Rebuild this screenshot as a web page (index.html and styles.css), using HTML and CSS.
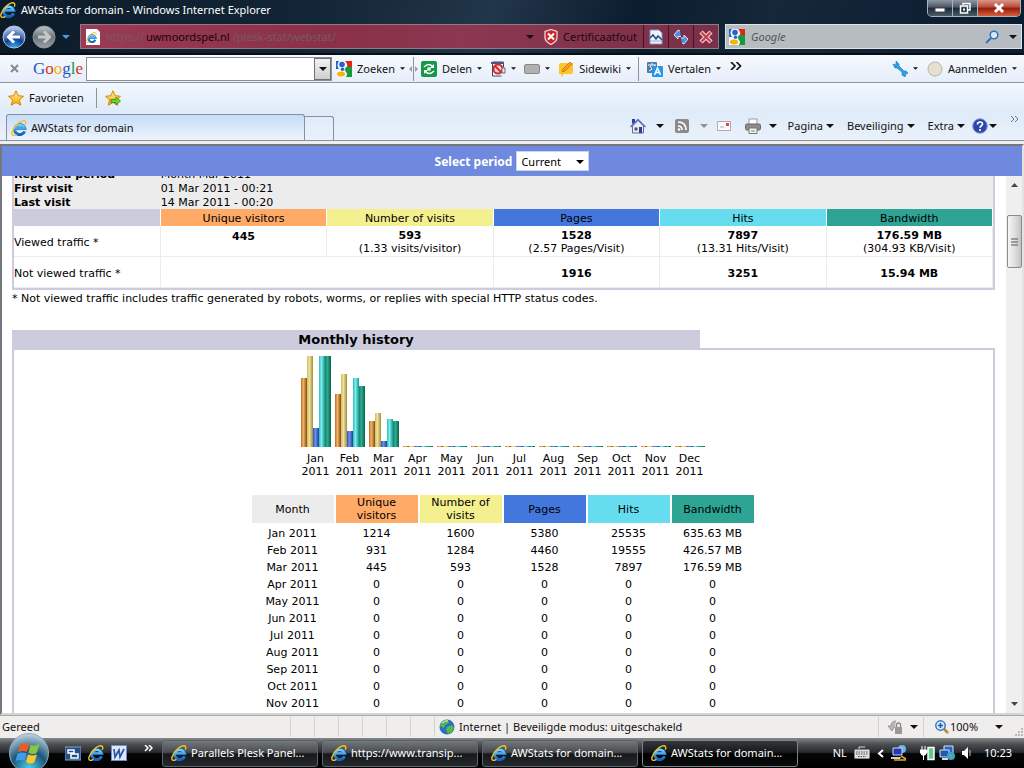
FILE: index.html
```html
<!DOCTYPE html>
<html lang="nl">
<head>
  <meta charset="UTF-8" />
  <meta name="viewport" content="width=device-width, initial-scale=1.0" />
  <title>AWStats for domain - Windows Internet Explorer</title>
  <link rel="stylesheet" href="styles.css">
</head>
<body>
  <!-- shared icons -->
  <svg width="0" height="0" class="defs" aria-hidden="true">
    <defs>
      <linearGradient id="ieBlue" x1="0" y1="0" x2="0" y2="1"><stop offset="0" stop-color="#6fd3fb"/><stop offset="1" stop-color="#0b62c4"/></linearGradient>
      <linearGradient id="gold" x1="0" y1="0" x2="0" y2="1"><stop offset="0" stop-color="#fff3a0"/><stop offset="1" stop-color="#f7a400"/></linearGradient>
      <linearGradient id="grey" x1="0" y1="0" x2="0" y2="1"><stop offset="0" stop-color="#c3c6ca"/><stop offset="0.5" stop-color="#6d7379"/><stop offset="1" stop-color="#9aa0a6"/></linearGradient>
      <radialGradient id="nav" cx="0.5" cy="1" r="0.9"><stop offset="0" stop-color="#35b5f5"/><stop offset="0.5" stop-color="#123f9a"/><stop offset="1" stop-color="#a9c0e6"/></radialGradient>
      <radialGradient id="orb" cx="0.5" cy="0.9" r="0.9"><stop offset="0" stop-color="#4fd0f0"/><stop offset="0.5" stop-color="#1b5578"/><stop offset="1" stop-color="#c2d8e4"/></radialGradient>
    </defs>
    <symbol id="ie" viewBox="0 0 16 16">
      <path d="M13.600 11.500A5.200 5 0 1 1 13.800 8.300H5" fill="none" stroke="#1767b8" stroke-width="3"/>
      <path d="M13.400 11.500A5 4.800 0 1 1 13.600 8.300H5" fill="none" stroke="url(#ieBlue)" stroke-width="2.200"/>
      <path d="M5.500 14.400C2 16.300.2 15.200 1 12.200 2.300 7.500 7.500 2 11.500.9 14.500.2 15.500 2 14.300 4.800" fill="none" stroke="#f6c02a" stroke-width="1.400"/>
    </symbol>
    <symbol id="down" viewBox="0 0 8 4"><path d="M0 0h8L4 4z" fill="currentColor"/></symbol>
    <symbol id="g" viewBox="0 0 16 16">
      <path d="M0 0h16v16H0z" fill="#f4f6f8"/><path d="M9 0h7v6h-5q1-3-2-6z" fill="#e2231a"/><path d="M10 6h6v10h-6q2-3 0-5-2-2 0-5z" fill="#159a3c"/><path d="M0 0h3q-3 4 0 8H0z" fill="#2b62c9"/><circle cx="6" cy="3.500" r="2.800" fill="#2b62c9"/><circle cx="6.500" cy="8.300" r="1.800" fill="#2b62c9"/><ellipse cx="5" cy="13" rx="4" ry="2.500" fill="#f6b500"/>
    </symbol>
    <symbol id="star" viewBox="0 0 16 16"><path d="M8 .8l2.2 4.9 5.3.6-4 3.6 1.2 5.3L8 12.5l-4.7 2.7 1.2-5.3-4-3.6 5.3-.6z" fill="url(#gold)" stroke="#d98500"/></symbol>
  </svg>

  <header class="chrome">
    <div class="title-bar">
      <svg class="icon"><use href="#ie"/></svg>
      <span>AWStats for domain - Windows Internet Explorer</span>
      <div class="window-buttons">
        <button aria-label="Minimize"><svg width="12" height="12" viewBox="0 0 12 12"><path d="M1 6h10v4H1z" fill="#fff" stroke="#445"/></svg></button>
        <button aria-label="Restore"><svg width="12" height="12" viewBox="0 0 12 12"><path d="M4 3V1.500h7v6.500H9M1.500 4h7v7h-7z" fill="none" stroke="#fff" stroke-width="1.500"/><path d="M4 6.500h2v2H4z" fill="#fff"/></svg></button>
        <button class="close" aria-label="Close"><svg width="12" height="12" viewBox="0 0 12 12"><path d="M2 2l8 8M10 2l-8 8" stroke="#fff" stroke-width="3"/></svg></button>
      </div>
    </div>
    <div class="address-row">
      <div class="nav-buttons">
        <button aria-label="Vorige"><svg width="24" height="24" viewBox="0 0 24 24"><circle cx="12" cy="12" r="11" fill="url(#nav)" stroke="#b4c3dc"/><path d="M18 12H7M12 6.500L6.500 12l5.500 5.500" fill="none" stroke="#fff" stroke-width="3"/></svg></button>
        <button aria-label="Volgende"><svg width="24" height="24" viewBox="0 0 24 24"><circle cx="12" cy="12" r="11" fill="url(#grey)" stroke="#8d959d"/><path d="M6 12h11M12 6.500l5.500 5.500-5.500 5.500" fill="none" stroke="#c5c9cc" stroke-width="3"/></svg></button>
        <svg class="caret blue"><use href="#down"/></svg>
      </div>
      <div class="address">
        <svg class="icon" viewBox="0 0 16 16"><path d="M1 0h11l3 3v13H1z" fill="#fff"/><use href="#ie" x="1" y="3" width="11" height="11"/></svg>
        <span class="url">https://<b>uwmoordspel.nl</b>/plesk-stat/webstat/</span>
        <svg class="caret"><use href="#down"/></svg>
        <button class="cert"><svg width="14" height="16" viewBox="0 0 14 16"><path d="M7 .5l6 2v6q0 4-6 7-6-3-6-7v-6z" fill="#c8282c" stroke="#e8d4d8" stroke-width="1.300"/><path d="M4 4.500l6 6M10 4.500l-6 6" stroke="#fff" stroke-width="2"/></svg>Certificaatfout</button>
        <button class="cell" aria-label="Compatibiliteit"><svg width="14" height="16" viewBox="0 0 14 16"><path d="M1 1h9l3 3v11H1z" fill="#eef3fa" stroke="#7d9cc4"/><path d="M1 9l3-3 3 4 2-3 4 4" fill="none" stroke="#304a80" stroke-width="1.500"/><path d="M1 12h12" stroke="#8fb0d8"/></svg></button>
        <button class="cell" aria-label="Vernieuwen"><svg width="16" height="16" viewBox="0 0 16 16"><path d="M7 2L5 1 1 6l4 4V7.500h3M9 14l2 1 4-5-4-4v3H8" fill="#4e91e0" stroke="#cfe2fa"/></svg></button>
        <button class="cell" aria-label="Stoppen"><svg width="14" height="14" viewBox="0 0 14 14"><path d="M2 2l10 10M12 2L2 12" stroke="#f7c8c8" stroke-width="4.500"/><path d="M2.500 2.500l9 9M11.500 2.500l-9 9" stroke="#c43c4c" stroke-width="2"/></svg></button>
      </div>
      <div class="search">
        <svg class="icon"><use href="#g"/></svg>
        <input type="text" placeholder="Google" aria-label="Zoeken met Google">
        <svg width="14" height="14" viewBox="0 0 14 14"><circle cx="9" cy="5" r="3.800" fill="#d6eafc" stroke="#3470b8" stroke-width="1.500"/><path d="M6 8l-5 5" stroke="#3470b8" stroke-width="2"/></svg>
        <svg class="caret"><use href="#down"/></svg>
      </div>
    </div>
  </header>

  <nav class="google-bar">
    <button class="dismiss" aria-label="Sluiten"><svg width="9" height="9" viewBox="0 0 9 9"><path d="M1 1l7 7M8 1L1 8" stroke="#85898f" stroke-width="2"/></svg></button>
    <span class="logo"><i class="b">G</i><i class="r">o</i><i class="y">o</i><i class="b">g</i><i class="n">l</i><i class="r">e</i></span>
    <div class="query">
      <input type="text" aria-label="Google zoekopdracht">
      <button aria-label="Geschiedenis"><svg class="caret"><use href="#down"/></svg></button>
    </div>
    <button><svg class="icon"><use href="#g"/></svg>Zoeken<svg class="caret small"><use href="#down"/></svg></button>
    <svg class="splitter" width="9" height="24" viewBox="0 0 9 24"><path d="M4.500 0v24" stroke="#8c939c"/><path d="M3 9v6L0 12zM6 9v6l3-3z" fill="#9a9fa6"/></svg>
    <button><svg class="icon" viewBox="0 0 16 16"><rect width="16" height="16" rx="2" fill="#16974a"/><path d="M3 6q5-5 9 0M13 10q-5 5-9 0" fill="none" stroke="#fff" stroke-width="1.500"/><circle cx="8" cy="8" r="2" fill="#d2f3de"/><path d="M13 3v4H9zM3 13V9h4z" fill="#fff"/></svg>Delen<svg class="caret small"><use href="#down"/></svg></button>
    <button class="wide" aria-label="Pop-ups"><svg class="icon" viewBox="0 0 16 16"><path d="M2.500 1h11v5M2.500 1v14h9" fill="#fff" stroke="#34466e"/><path d="M1 1h13v2H1z" fill="#44577e"/><circle cx="8" cy="8" r="4.500" fill="#fbd8d8" stroke="#d42a2a" stroke-width="2"/><path d="M5 5l6 6" stroke="#d42a2a" stroke-width="2"/><path d="M12 7h3v5h-3z" fill="#eee" stroke="#667"/></svg><svg class="caret small"><use href="#down"/></svg></button>
    <button class="wide" aria-label="PageRank"><svg class="icon" viewBox="0 0 16 16"><rect x=".5" y="3.500" width="15" height="9" rx="1.500" fill="#b0b0b0" stroke="#888"/></svg><svg class="caret small"><use href="#down"/></svg></button>
    <button class="wide"><svg class="icon" viewBox="0 0 16 16"><path d="M1 4q0-2 2-2h12v9q0 2-2 2H6l-3 3v-3H1z" fill="#fdc52c"/><path d="M4 11l1-3 7-7 2 2-7 7z" fill="#ff9a1e" stroke="#b76a10" stroke-width=".7"/></svg>Sidewiki<svg class="caret small"><use href="#down"/></svg></button>
    <span class="divider"></span>
    <button><svg class="icon" viewBox="0 0 16 16"><rect width="10" height="11" y="1" rx="1" fill="#56799e"/><path d="M1 4h8M5 2v2M2 10q5-2 6-6M3 5q2 4 5 5" fill="none" stroke="#fff"/><rect x="5" y="5" width="11" height="11" rx="1" fill="#2796e8"/><path d="M7.500 14L10.500 7l3 7M8.500 11.500h4" fill="none" stroke="#fff" stroke-width="1.500"/></svg>Vertalen<svg class="caret small"><use href="#down"/></svg></button>
    <button class="more" aria-label="Meer"><svg width="12" height="8" viewBox="0 0 12 8"><path d="M1 0l4 4-4 4M6.500 0l4 4-4 4" fill="none" stroke="#111" stroke-width="1.700"/></svg></button>
    <div class="right">
      <button aria-label="Opties"><svg class="icon" viewBox="0 0 16 16"><path d="M1 3l3 1V0l3 3v2l5 5h2l2 2-2 1-1 3-3-2V11L5 7H3z" fill="#27a1e8" stroke="#1576b8" stroke-width=".6"/></svg><svg class="caret small"><use href="#down"/></svg></button>
      <button><svg class="icon" viewBox="0 0 16 16"><circle cx="8" cy="8" r="7" fill="#e5e1cd" stroke="#b8b5a5"/></svg>Aanmelden<svg class="caret small"><use href="#down"/></svg></button>
    </div>
  </nav>

  <div class="lower-bars">
    <div class="favorites">
      <button><svg class="icon"><use href="#star"/></svg>Favorieten</button>
      <span class="divider"></span>
      <button aria-label="Toevoegen"><svg class="icon" viewBox="0 0 16 16"><use href="#star"/><path d="M6 9.500h5V7l4.500 4-4.500 4v-2.500H6z" fill="#6cd82e" stroke="#2c8a16" stroke-width=".8"/></svg></button>
    </div>
    <div class="tab-row">
      <button class="tab"><svg class="icon"><use href="#ie"/></svg>AWStats for domain</button>
      <button class="new-tab" aria-label="Nieuw tabblad"></button>
      <div class="commands">
        <button class="home" aria-label="Startpagina"><svg class="icon" viewBox="0 0 16 16"><path d="M2.500 8v7h11V8L8 2.500z" fill="#e9edf5" stroke="#626f92"/><path d="M.5 9L8 1.500 15.500 9" fill="none" stroke="#5a6cc0" stroke-width="1.300"/><path d="M2 1h3v3L2 6z" fill="#2b3fae"/><path d="M9 9h3v6H9z" fill="#2b3d98"/><path d="M4.500 9.500h3v3h-3z" fill="#555"/></svg><svg class="caret"><use href="#down"/></svg></button>
        <button class="feed" aria-label="Feeds"><svg class="icon" viewBox="0 0 16 16"><rect x="1" y="1" width="14" height="14" rx="2" fill="#8a8a8a"/><path d="M4 8q4 0 4 4M4 4q8 0 8 8" fill="none" stroke="#fff" stroke-width="1.700"/><circle cx="5" cy="11.500" r="1.300" fill="#fff"/></svg><svg class="caret dim"><use href="#down"/></svg></button>
        <button class="mail" aria-label="E-mail"><svg class="icon" viewBox="0 0 16 16"><path d="M1.500 3.500h13v9h-13z" fill="#fbfbfb" stroke="#a8adb5"/><path d="M10 5h3v3h-3z" fill="#e04848"/><path d="M4 9h4" stroke="#a8adb5"/></svg></button>
        <button class="print" aria-label="Afdrukken"><svg class="icon" viewBox="0 0 16 16"><path d="M4 1h8v6H4z" fill="#fff" stroke="#999"/><rect x=".5" y="6" width="15" height="6" rx="1.500" fill="#8c8c8c" stroke="#666"/><path d="M4 10h8v5.500H4z" fill="#f5f5f5" stroke="#777"/><path d="M6 13h4" stroke="#4a4"/></svg><svg class="caret"><use href="#down"/></svg></button>
        <button>Pagina<svg class="caret"><use href="#down"/></svg></button>
        <button>Beveiliging<svg class="caret"><use href="#down"/></svg></button>
        <button>Extra<svg class="caret"><use href="#down"/></svg></button>
        <button class="help" aria-label="Help"><svg class="icon" viewBox="0 0 16 16"><circle cx="8" cy="8" r="7.300" fill="#2a46ac" stroke="#8aa0d8"/><path d="M5.500 6.500q0-2.500 2.500-2.500t2.500 2q0 1-1.200 1.800T8 9.800M8 11v2" fill="none" stroke="#fff" stroke-width="1.700"/></svg><svg class="caret"><use href="#down"/></svg></button>
        <svg class="overflow" width="9" height="6" viewBox="0 0 9 6"><path d="M1 0l3 3-3 3M5 0l3 3-3 3" fill="none" stroke="#5a73a8"/></svg>
      </div>
    </div>
  </div>

  <div class="viewport">
    <form class="period-bar">
      <label for="period">Select period</label>
      <div class="select-wrap">
        <select id="period"><option>Current</option></select>
        <svg class="caret"><use href="#down"/></svg>
      </div>
    </form>
    <div class="scroll-area">
      <main class="report">
        <section class="summary">
          <dl>
            <dt>Reported period</dt><dd>Month Mar 2011</dd>
            <dt>First visit</dt><dd>01 Mar 2011 - 00:21</dd>
            <dt>Last visit</dt><dd>14 Mar 2011 - 00:20</dd>
          </dl>
          <table class="traffic">
            <tr><th class="lead"></th><th class="visitors">Unique visitors</th><th class="visits">Number of visits</th><th class="pages">Pages</th><th class="hits">Hits</th><th class="bandwidth">Bandwidth</th></tr>
            <tr><td class="label">Viewed traffic *</td><td class="top"><b>445</b></td><td><b>593</b><br>(1.33 visits/visitor)</td><td><b>1528</b><br>(2.57 Pages/Visit)</td><td><b>7897</b><br>(13.31 Hits/Visit)</td><td><b>176.59 MB</b><br>(304.93 KB/Visit)</td></tr>
            <tr><td class="label">Not viewed traffic *</td><td colspan="2"></td><td><b>1916</b></td><td><b>3251</b></td><td><b>15.94 MB</b></td></tr>
          </table>
        </section>
        <p class="note">* Not viewed traffic includes traffic generated by robots, worms, or replies with special HTTP status codes.</p>

        <h2>Monthly history</h2>
        <section class="history">
          <div class="chart">
            <div class="month"><div class="bars"><i style="height:69px"></i><i style="height:91px"></i><i style="height:19px"></i><i style="height:91px"></i><i style="height:91px"></i></div>Jan<br>2011</div>
            <div class="month"><div class="bars"><i style="height:53px"></i><i style="height:73px"></i><i style="height:16px"></i><i style="height:69px"></i><i style="height:61px"></i></div>Feb<br>2011</div>
            <div class="month"><div class="bars"><i style="height:26px"></i><i style="height:34px"></i><i style="height:6px"></i><i style="height:28px"></i><i style="height:26px"></i></div>Mar<br>2011</div>
            <div class="month"><div class="bars"><i></i><i></i><i></i><i></i><i></i></div>Apr<br>2011</div>
            <div class="month"><div class="bars"><i></i><i></i><i></i><i></i><i></i></div>May<br>2011</div>
            <div class="month"><div class="bars"><i></i><i></i><i></i><i></i><i></i></div>Jun<br>2011</div>
            <div class="month"><div class="bars"><i></i><i></i><i></i><i></i><i></i></div>Jul<br>2011</div>
            <div class="month"><div class="bars"><i></i><i></i><i></i><i></i><i></i></div>Aug<br>2011</div>
            <div class="month"><div class="bars"><i></i><i></i><i></i><i></i><i></i></div>Sep<br>2011</div>
            <div class="month"><div class="bars"><i></i><i></i><i></i><i></i><i></i></div>Oct<br>2011</div>
            <div class="month"><div class="bars"><i></i><i></i><i></i><i></i><i></i></div>Nov<br>2011</div>
            <div class="month"><div class="bars"><i></i><i></i><i></i><i></i><i></i></div>Dec<br>2011</div>
          </div>
          <table class="months">
            <tr><th class="name">Month</th><th class="visitors">Unique visitors</th><th class="visits">Number of visits</th><th class="pages">Pages</th><th class="hits">Hits</th><th class="bandwidth">Bandwidth</th></tr>
            <tr><td>Jan 2011</td><td>1214</td><td>1600</td><td>5380</td><td>25535</td><td>635.63 MB</td></tr>
            <tr><td>Feb 2011</td><td>931</td><td>1284</td><td>4460</td><td>19555</td><td>426.57 MB</td></tr>
            <tr><td>Mar 2011</td><td>445</td><td>593</td><td>1528</td><td>7897</td><td>176.59 MB</td></tr>
            <tr><td>Apr 2011</td><td>0</td><td>0</td><td>0</td><td>0</td><td>0</td></tr>
            <tr><td>May 2011</td><td>0</td><td>0</td><td>0</td><td>0</td><td>0</td></tr>
            <tr><td>Jun 2011</td><td>0</td><td>0</td><td>0</td><td>0</td><td>0</td></tr>
            <tr><td>Jul 2011</td><td>0</td><td>0</td><td>0</td><td>0</td><td>0</td></tr>
            <tr><td>Aug 2011</td><td>0</td><td>0</td><td>0</td><td>0</td><td>0</td></tr>
            <tr><td>Sep 2011</td><td>0</td><td>0</td><td>0</td><td>0</td><td>0</td></tr>
            <tr><td>Oct 2011</td><td>0</td><td>0</td><td>0</td><td>0</td><td>0</td></tr>
            <tr><td>Nov 2011</td><td>0</td><td>0</td><td>0</td><td>0</td><td>0</td></tr>
          </table>
        </section>
      </main>
      <div class="scrollbar">
        <svg width="7" height="4"><path d="M0 4h7L3.500 0z" fill="#444"/></svg>
        <div class="thumb"><svg width="7" height="8" viewBox="0 0 7 8"><path d="M0 1h7M0 4h7M0 7h7" stroke="#555"/></svg></div>
        <svg width="7" height="4"><path d="M0 0h7L3.500 4z" fill="#444"/></svg>
      </div>
    </div>
  </div>

  <footer class="status-bar">
    <span class="state">Gereed</span>
    <div class="ticks"><i></i><i></i><i></i><i></i><i></i><i></i><i></i></div>
    <svg class="icon" viewBox="0 0 16 16"><circle cx="8" cy="8" r="7.500" fill="#2c6fc2"/><path d="M3 3q3-3 6-2l1 3-4 2-1 3-4-2zM8 8l5-2 2 3-3 5-3 1-2-4z" fill="#57b947"/><path d="M3 4q3-3 6-2" stroke="#d7f2fb" fill="none"/></svg>
    <span class="zone">Internet | Beveiligde modus: uitgeschakeld</span>
    <button class="lock" aria-label="Privacy"><svg class="icon" viewBox="0 0 16 16"><path d="M9 2q-5 0-5 5H1l4 5 3-5" fill="#b6b6b6" stroke="#999"/><rect x="8" y="8" width="7" height="7" fill="#999"/><path d="M9.500 8V6q0-2 2-2t2 2v2" fill="none" stroke="#888" stroke-width="1.300"/></svg><svg class="caret"><use href="#down"/></svg></button>
    <button class="zoom"><svg width="14" height="14" viewBox="0 0 14 14"><path d="M8 8l5 5" stroke="#b98a3c" stroke-width="2.500"/><circle cx="5.500" cy="5.500" r="4.700" fill="#d4eafc" stroke="#3b78bd" stroke-width="1.500"/><path d="M3 5.500h5M5.500 3v5" stroke="#1d5bb0" stroke-width="1.500"/></svg><span>100%</span><svg class="caret"><use href="#down"/></svg></button>
    <svg class="grip" width="8" height="8" viewBox="0 0 8 8"><path d="M6 0h2v2H6zM3 3h2v2H3zM6 3h2v2H6zM0 6h2v2H0zM3 6h2v2H3zM6 6h2v2H6z" fill="#bdb9b9"/></svg>
  </footer>

  <footer class="taskbar">
    <button class="start" aria-label="Start"><svg width="42" height="42" viewBox="0 0 42 42"><circle cx="21" cy="21" r="19.500" fill="url(#orb)" stroke="#8fa9b8"/><path d="M12 13q4-3 9-1l-2 8q-4-2-9 0z" fill="#ef5a25"/><path d="M22.500 13q4 2 9-1l-2.500 8.500q-4 3-8.500 0z" fill="#86c83e"/><path d="M9.500 21.500q5-2 9 0l-2 7.500q-4-2-9 0z" fill="#3d9be8"/><path d="M20 22.500q4 2 9 0l-2.500 7.500q-4 3-8.500 0z" fill="#fcc628"/></svg></button>
    <div class="quick">
      <button aria-label="Vensters"><svg class="icon" viewBox="0 0 16 16"><rect y="2" width="16" height="13" fill="#234f86" stroke="#7fa4cc"/><path d="M3 5h6v3H3zM6 9h7v4H6z" fill="none" stroke="#fff" stroke-width="1.500"/></svg></button>
      <button aria-label="Internet Explorer"><svg class="icon"><use href="#ie"/></svg></button>
      <button aria-label="Word"><svg class="icon" viewBox="0 0 16 16"><rect width="16" height="16" fill="#6a8fd0"/><path d="M1 1h14v14H1z" fill="#dde8f8"/><path d="M3 4l1 8 4-7 1 7 4-8" fill="none" stroke="#2a52a6" stroke-width="1.700"/></svg></button>
      <svg class="overflow" width="9" height="7" viewBox="0 0 9 7"><path d="M1 0l3 3-3 3M5 0l3 3-3 3" fill="none" stroke="#fff" stroke-width="1.500"/></svg>
    </div>
    <div class="tasks">
      <button><svg class="icon"><use href="#ie"/></svg>Parallels Plesk Panel...</button>
      <button><svg class="icon"><use href="#ie"/></svg>https://www.transip...</button>
      <button><svg class="icon"><use href="#ie"/></svg>AWStats for domain...</button>
      <button class="active"><svg class="icon"><use href="#ie"/></svg>AWStats for domain...</button>
    </div>
    <div class="tray">
      <span>NL</span>
      <svg class="icon" viewBox="0 0 16 16"><path d="M5 4V2h6" fill="none" stroke="#ddd"/><rect x=".5" y="4.500" width="15" height="9" rx="1" fill="#ddd" stroke="#888"/><path d="M2 7h12M2 9h12M4 11.500h8" stroke="#555" stroke-dasharray="1.500 1"/></svg>
      <svg width="7" height="9" viewBox="0 0 7 9"><path d="M6 1L2 4.500 6 8" fill="none" stroke="#fff" stroke-width="2"/></svg>
      <svg class="icon" viewBox="0 0 16 16"><circle cx="11" cy="4" r="4" fill="#66b6e8"/><path d="M2 3h9v7H2z" fill="#2636b8" stroke="#cdd6ee"/><path d="M0 12h10l-1 2H0z" fill="#ccc"/><path d="M3 15h12M10 11l5 3" stroke="#e0a52c" stroke-width="1.500"/></svg>
      <svg class="icon power" viewBox="0 0 16 16"><path d="M2 1v4M5 1v4M0 5h7v2L5 10H2L0 7zM3.500 10v5" fill="#fff" stroke="#fff"/><rect x="8" y="2.500" width="6" height="12" fill="#63c88e" stroke="#fff" stroke-width="1.500"/></svg>
      <svg class="icon" viewBox="0 0 16 16"><path d="M5 1h9v8H5z" fill="#2866c8" stroke="#d5e6f5"/><path d="M1 5h9v7H1z" fill="#1d59b5" stroke="#d5e6f5"/><path d="M3 14h6" stroke="#ddd" stroke-width="2"/><circle cx="12" cy="11" r="4" fill="#3f9fd0"/><path d="M10 9l3 1-1 4z" fill="#65c64a"/></svg>
      <svg width="9" height="14" viewBox="0 0 9 14"><path d="M0 5h2l4-4v12L2 9H0z" fill="#fff"/><path d="M8 4v6" stroke="#bbb"/></svg>
      <time>10:23</time>
    </div>
  </footer>
</body>
</html>
```
FILE: styles.css
```css
* {
  box-sizing: border-box;
}

body {
  margin: 0;
  height: 100vh;
  display: flex;
  flex-direction: column;
  overflow: hidden;
  font-family: "Noto Sans", "Open Sans", sans-serif;
  font-size: 11px;
  line-height: 16px;
  color: #111;
  background-color: #f0eded;
}

button {
  display: flex;
  align-items: center;
  gap: 5px;
  padding: 0;
  border: none;
  background: none;
  font: inherit;
  color: inherit;
  white-space: nowrap;
}

svg {
  flex: none;
  display: block;
}

input {
  min-width: 0;
  font: inherit;
}

.defs {
  position: absolute;
}

.icon {
  width: 16px;
  height: 16px;
}

.caret {
  width: 8px;
  height: 4px;
}

.caret.small {
  width: 5px;
  height: 3px;
}

.caret.blue {
  color: #4a9be0;
}

.caret.dim {
  color: #8a8f98;
}

.divider {
  width: 1px;
  height: 24px;
  background-color: #8c939c;
}

/* title and address */
.chrome {
  height: 55px;
  background: linear-gradient(100deg, #0d1b29 0%, #122536 30%, #223649 48%, #0b1c2e 62%, #14283a 75%, #0a1c30 100%);
  border-bottom: 2px solid #060f18;
}

.title-bar {
  display: flex;
  align-items: center;
  gap: 5px;
  height: 20px;
  color: #fff;
}

.window-buttons {
  display: flex;
  align-self: flex-start;
  height: 17px;
  margin-left: auto;
  margin-right: 3px;
  border: 1px solid #a9b3bd;
  border-top: none;
  border-radius: 0 0 5px 5px;
  overflow: hidden;
}

.window-buttons button {
  width: 25px;
  justify-content: center;
  border-right: 1px solid #a9b3bd;
  background: linear-gradient(#8d98a3, #4a5764 45%, #1b2937 50%, #4b5c6b);
}

.window-buttons .close {
  width: 42px;
  border-right: none;
  background: linear-gradient(#d9968a, #b94a38 45%, #911a0b 50%, #d75e3b);
}

.address-row {
  display: flex;
  align-items: center;
  gap: 6px;
  height: 33px;
  padding: 0 2px;
}

.nav-buttons {
  display: flex;
  align-items: center;
  gap: 6px;
  width: 72px;
}

.address {
  flex: 1;
  display: flex;
  align-items: center;
  height: 25px;
  padding-left: 4px;
  border: 1px solid #8d7b88;
  background: linear-gradient(90deg, #9b3a54, #8a3048 40%, #8b3850 60%, #7a2f48);
}

.url {
  flex: 1;
  margin-left: 5px;
  color: #735b66;
}

.url b {
  margin: 0 3px 0 2px;
  font-weight: normal;
  color: #120509;
}

.cert {
  margin: 0 6px 0 10px;
  color: #1e0710;
}

.cell {
  align-self: stretch;
  justify-content: center;
  width: 25px;
  border-left: 1px solid #3f1522;
}

.search {
  display: flex;
  align-items: center;
  gap: 6px;
  width: 297px;
  height: 25px;
  padding: 0 4px 0 3px;
  border: 1px solid #dfe3e6;
  background-color: #b7bcc1;
}

.search input {
  flex: 1;
  padding: 0;
  border: none;
  background: none;
  font-style: italic;
}

.search input::placeholder {
  color: #555;
}

.search .caret {
  margin-left: 4px;
}

/* google toolbar */
.google-bar {
  display: flex;
  align-items: center;
  height: 28px;
  padding: 0 7px 0 10px;
  background: linear-gradient(#f6f9fe, #e6eefa);
  border-bottom: 1px solid #8d97a5;
}

.logo {
  margin: 0 3px 0 14px;
  font-family: "Liberation Serif", serif;
  font-size: 17px;
}

.logo i {
  font-style: normal;
}

.logo .b { color: #2a56c6; }
.logo .r { color: #d8321f; }
.logo .y { color: #eeb211; }
.logo .n { color: #0f9a3d; }

.query {
  display: flex;
  width: 246px;
  height: 24px;
  margin-right: 4px;
  border: 1px solid #8b8f96;
  background-color: #fff;
}

.query input {
  flex: 1;
  border: none;
}

.query button {
  width: 17px;
  justify-content: center;
  border: 1px solid #707070;
  background: linear-gradient(#f2f2f2, #cfcfcf);
}

.splitter {
  margin: 0 3px 0 4px;
}

.google-bar .wide {
  margin-left: 8px;
}

.google-bar .divider {
  margin: 0 8px 0 7px;
}

.google-bar .more {
  align-self: flex-start;
  margin: 7px 0 0 9px;
}

.google-bar .right {
  display: flex;
  gap: 9px;
  margin-left: auto;
}

/* favorites, tabs, commands */
.lower-bars {
  background: linear-gradient(#f3f8fe, #dfebf9 50%, #eaf1fa);
}

.favorites {
  display: flex;
  align-items: center;
  gap: 8px;
  height: 30px;
  padding-left: 8px;
}

.favorites .divider {
  height: 20px;
  margin-left: 4px;
}

.tab-row {
  display: flex;
  align-items: flex-end;
  height: 28px;
  padding-left: 6px;
  border-bottom: 1px solid #8790a0;
}

.tab {
  flex: 0 1 299px;
  height: 26px;
  padding-left: 4px;
  gap: 4px;
  border: 1px solid #8790a0;
  border-bottom: none;
  border-radius: 3px 3px 0 0;
  background: linear-gradient(#c5dcf8, #eef4fc);
}

.new-tab {
  width: 29px;
  height: 24px;
  border: 1px solid #8790a0;
  border-left: none;
  border-bottom: none;
  border-radius: 0 3px 0 0;
}

.commands {
  display: flex;
  align-items: center;
  gap: 13px;
  height: 28px;
  margin-left: auto;
  padding-right: 5px;
}

.commands button {
  gap: 3px;
}

.commands .home {
  gap: 10px;
}

.commands .feed {
  gap: 10px;
  margin-left: -3px;
}

.commands .mail {
  margin-left: -5px;
}

.commands .print {
  gap: 8px;
  margin-right: -2px;
}

.commands .help {
  gap: 1px;
  margin-left: -6px;
}

.commands .overflow {
  align-self: flex-start;
  margin-top: 4px;
}

/* web page */
.viewport {
  flex: 1;
  min-height: 0;
  display: flex;
  flex-direction: column;
  margin-top: 3px;
  border: 2px solid #74787d;
  border-right-color: #e3e3e3;
  border-bottom-color: #d5d5d5;
  font-family: "DejaVu Sans", Verdana, sans-serif;
  line-height: 13px;
  color: #000;
  background-color: #fff;
}

.period-bar {
  flex: none;
  display: flex;
  align-items: center;
  justify-content: center;
  gap: 4px;
  height: 30px;
  background-color: #6e89dd;
  font-family: "Noto Sans", sans-serif;
}

.period-bar label {
  font-size: 12px;
  font-weight: bold;
  color: #fff;
}

.select-wrap {
  position: relative;
}

.select-wrap select {
  appearance: none;
  display: block;
  width: 73px;
  height: 20px;
  padding: 0 4px;
  border: 1px solid #c9d3ee;
  border-radius: 0;
  font: inherit;
  background-color: #fff;
  color: #000;
}

.select-wrap .caret {
  position: absolute;
  right: 5px;
  top: 9px;
  pointer-events: none;
}

.scroll-area {
  flex: 1;
  min-height: 0;
  display: flex;
  overflow: hidden;
}

.report {
  flex: 1;
  margin-top: -9px;
  padding: 0 11px 0 10px;
}

.summary {
  border: 2px solid #ccccdd;
  border-top: none;
  background-color: #fff;
}

.summary dl {
  display: grid;
  grid-template-columns: 15% 1fr;
  grid-auto-rows: 14px;
  line-height: 16px;
  margin: 0;
  background-color: #ececec;
}

.summary dt {
  font-weight: bold;
}

.summary dd {
  margin: 0;
}

table {
  font-size: 11px;
  text-align: center;
}

th {
  font-weight: normal;
}

.traffic {
  width: 100%;
  table-layout: fixed;
  border-collapse: separate;
  border-spacing: 0;
}

.traffic th {
  width: 17%;
  height: 17px;
  padding: 2px 0 0;
  border-right: 1px solid #fff;
}

.traffic .lead {
  width: 15%;
  background-color: #ccccdd;
}

.traffic td {
  height: 31px;
  padding: 2px 0 0;
  border-right: 1px solid #ececec;
  border-bottom: 1px solid #ececec;
}

.traffic .label {
  text-align: left;
}

.traffic .top {
  vertical-align: top;
  padding-top: 4px;
}

.visitors { background-color: #ffaa66; }
.visits { background-color: #f4f090; }
.pages { background-color: #4477dd; }
.hits { background-color: #66ddee; }
.bandwidth { background-color: #2ea495; }
.name { background-color: #ececec; }

.note {
  margin: 2px 0 25px;
}

.report h2 {
  width: 70%;
  height: 18px;
  margin: 0;
  font-size: 13px;
  line-height: 20px;
  text-align: center;
  background-color: #ccccdd;
}

.history {
  padding: 6px 2px 20px 0;
  border: 2px solid #ccccdd;
  background-color: #fff;
}

.chart {
  display: flex;
  justify-content: center;
  gap: 4px;
}

.month {
  width: 30px;
  text-align: center;
}

.bars {
  display: flex;
  align-items: flex-end;
  height: 91px;
  margin-bottom: 5px;
}

.bars i {
  width: 6px;
  height: 1px;
  background: linear-gradient(90deg, #b86f20, #f0b468 40%, #8a4a08);
}

.bars i:nth-child(2) { background: linear-gradient(90deg, #cdbb62, #f0e29c 40%, #a28c38); }
.bars i:nth-child(3) { background: linear-gradient(90deg, #2c56c0, #6c92ec 40%, #1c3c9c); }
.bars i:nth-child(4) { background: linear-gradient(90deg, #2cb8b8, #7cf0ec 40%, #1c9494); }
.bars i:nth-child(5) { background: linear-gradient(90deg, #16806a, #2cae90 40%, #08604a); }

.months {
  margin: 15px auto 0;
  border-spacing: 2px;
}

.months th {
  width: 82px;
  height: 28px;
  padding: 0 8px;
}

.months td {
  height: 15px;
  padding: 2px 0 0;
}

.scrollbar {
  display: flex;
  flex-direction: column;
  align-items: center;
  width: 16px;
  padding: 7px 0;
  background-color: #efefef;
}

.thumb {
  display: flex;
  align-items: center;
  justify-content: center;
  width: 15px;
  height: 53px;
  margin: 28px 0 auto;
  border: 1px solid #8b8b8b;
  border-radius: 2px;
  background: linear-gradient(90deg, #f6f6f6, #e0e0e0 50%, #c2c2c2);
}

/* status bar */
.status-bar {
  display: flex;
  align-items: center;
  height: 23px;
  border-top: 1px solid #a8a8a8;
}

.state {
  width: 290px;
  padding-left: 2px;
}

.ticks {
  display: flex;
  gap: 23px;
  margin-right: 4px;
}

.ticks i {
  width: 1px;
  height: 20px;
  background-color: #d5d1d1;
}

.zone {
  flex: 1;
  margin-left: 4px;
}

.lock,
.zoom {
  height: 20px;
  border-left: 1px solid #d5d1d1;
}

.lock {
  width: 45px;
  gap: 7px;
  padding-left: 8px;
}

.zoom {
  width: 92px;
  padding-left: 11px;
  gap: 1px;
}

.zoom span {
  width: 44px;
  text-align: left;
}

.grip {
  align-self: flex-end;
  margin: 0 1px 2px 0;
}

/* taskbar */
.taskbar {
  display: flex;
  align-items: center;
  height: 30px;
  color: #fff;
  background: linear-gradient(#84898c, #4c5053 20%, #262a2c 48%, #050607 52%, #000);
}

.start {
  position: relative;
  z-index: 1;
  width: 65px;
  height: 38px;
  padding-left: 8px;
}

.quick {
  display: flex;
  align-items: center;
  gap: 7px;
  width: 97px;
}

.quick .overflow {
  align-self: flex-start;
  margin-left: 10px;
}

.tasks {
  flex: 0 1 636px;
  display: flex;
  gap: 4px;
}

.tasks button {
  flex: 1;
  height: 27px;
  padding-left: 8px;
  gap: 4px;
  border: 1px solid #5f6467;
  border-radius: 3px;
  background: linear-gradient(#74797c, #484c4f 45%, #16191b 52%, #25292b);
}

.tasks .active {
  border-color: #7c8286;
  background: linear-gradient(#33383a, #17191b 45%, #000 52%, #0a0c0d);
}

.tray {
  display: flex;
  align-items: center;
  gap: 7px;
  margin-left: auto;
  padding-right: 12px;
}

.tray .power {
  margin: 0 -4px 0 6px;
}

.tray time {
  margin-left: 6px;
}
```
